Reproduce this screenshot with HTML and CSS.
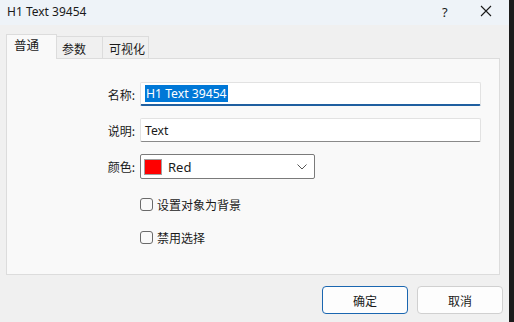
FILE: index.html
```html
<!DOCTYPE html>
<html>
<head>
<meta charset="utf-8">
<link rel="stylesheet" href="styles.css">
</head>
<body>
<div class="screen">
  <div class="window">
    <div class="titlebar">
      <span class="title">H1 Text 39454</span>
      <span class="help">?</span>
      <span class="close">
        <svg width="12" height="12" viewBox="0 0 12 12"><path d="M1 1 L11 11 M11 1 L1 11" stroke="#1a1a1a" stroke-width="1.1" fill="none"/></svg>
      </span>
    </div>
    <div class="content">
      <div class="tabs">
        <div class="tab active">普通</div>
        <div class="tab">参数</div>
        <div class="tab">可视化</div>
      </div>
      <div class="panel">
        <div class="form">
          <label class="lbl">名称:</label>
          <div class="input focused"><span class="sel">H1 Text 39454</span></div>
          <label class="lbl">说明:</label>
          <div class="input">Text</div>
          <label class="lbl">颜色:</label>
          <div class="combo">
            <span class="swatch"></span>
            <span class="combo-text">Red</span>
            <svg class="chev" width="10" height="6" viewBox="0 0 10 6"><path d="M0.5 0.5 L5 5 L9.5 0.5" stroke="#555" stroke-width="1" fill="none"/></svg>
          </div>
        </div>
        <div class="checks">
          <div class="check"><span class="box"></span><span>设置对象为背景</span></div>
          <div class="check"><span class="box"></span><span>禁用选择</span></div>
        </div>
      </div>
      <div class="buttons">
        <div class="btn primary">确定</div>
        <div class="btn">取消</div>
      </div>
    </div>
  </div>
  <div class="strip"></div>
</div>
</body>
</html>
```
FILE: styles.css
```css
html, body {
  margin: 0;
  padding: 0;
}
body {
  width: 514px;
  height: 322px;
  overflow: hidden;
  font-family: "Noto Sans", "Noto Sans CJK SC", sans-serif;
  font-size: 12px;
  color: #1a1a1a;
}
.screen {
  display: flex;
  width: 514px;
  height: 322px;
}
.window {
  width: 509px;
  height: 322px;
  background: #f0f0f0;
  display: flex;
  flex-direction: column;
}
.strip {
  width: 5px;
  background: #1b1b1b;
}
.titlebar {
  height: 25px;
  background: #eef3f8;
  display: flex;
  align-items: center;
  box-sizing: border-box;
  padding-left: 7px;
}
.title {
  flex: 1;
  font-size: 12px;
  line-height: 14px;
  margin-top: -2px;
}
.help {
  width: 12px;
  font-size: 13px;
  margin-right: 26px;
  margin-top: -2px;
}
.close {
  width: 12px;
  height: 12px;
  margin-right: 17px;
  margin-top: -3px;
  display: flex;
}
.content {
  flex: 1;
  display: flex;
  flex-direction: column;
  padding: 9px 9px 0 6px;
}
.tabs {
  display: flex;
  align-items: flex-end;
  height: 24px;
  font-family: "Noto Sans CJK SC", sans-serif;
  font-size: 12px;
  position: relative;
  z-index: 1;
}
.tab {
  height: 22px;
  width: 47px;
  box-sizing: border-box;
  border: 1px solid #dcdcdc;
  border-bottom: none;
  background: #f0f0f0;
  padding: 0 0 0 5px;
  line-height: 23px;
  white-space: nowrap;
  margin-left: -1px;
}
.tab.active {
  height: 25px;
  width: 51px;
  margin-left: 0;
  background: #f9f9f9;
  padding: 0 0 0 7px;
  line-height: 20px;
  margin-bottom: -1px;
  font-size: 12.5px;
}
.tab:last-child {
  padding-left: 6px;
}
.panel {
  height: 217px;
  box-sizing: border-box;
  background: #f9f9f9;
  border: 1px solid #dcdcdc;
  padding-top: 23px;
}
.form {
  display: grid;
  grid-template-columns: 128px 341px;
  column-gap: 5px;
  row-gap: 12px;
  align-items: center;
  font-family: "Noto Sans CJK SC", sans-serif;
}
.lbl {
  text-align: right;
  font-size: 12px;
}
.input {
  height: 24px;
  box-sizing: border-box;
  background: #ffffff;
  border: 1px solid #e2e2e2;
  border-bottom: 1px solid #8a8a8a;
  padding: 0 4px;
  display: flex;
  align-items: center;
  font-family: "Noto Sans", sans-serif;
  font-size: 12.2px;
  border-radius: 2px;
}
.input.focused {
  border-bottom: 2px solid #1f5fa0;
}
.sel {
  background: #0078d7;
  color: #ffffff;
  line-height: 17px;
  padding: 0 1px;
}
.combo {
  width: 175px;
  height: 25px;
  box-sizing: border-box;
  background: #ffffff;
  border: 1px solid #7a7a7a;
  border-radius: 2px;
  display: flex;
  align-items: center;
  padding: 0 7px 0 3px;
  font-family: "Noto Sans", sans-serif;
  font-size: 13px;
}
.swatch {
  width: 18px;
  height: 16px;
  box-sizing: border-box;
  background: #ff0000;
  border: 1px solid #a0a0a0;
}
.combo-text {
  flex: 1;
  margin-left: 6px;
}
.chev {
  display: block;
}
.checks {
  display: flex;
  flex-direction: column;
  gap: 20px;
  margin-top: 19px;
  padding-left: 133px;
  font-family: "Noto Sans CJK SC", sans-serif;
}
.check {
  display: flex;
  align-items: center;
  height: 13px;
  gap: 4px;
}
.box {
  width: 13px;
  height: 13px;
  box-sizing: border-box;
  border: 1px solid #6a6a6a;
  border-radius: 3px;
  background: #f9f9f9;
}
.buttons {
  display: flex;
  justify-content: flex-end;
  gap: 9px;
  padding-top: 11px;
  margin-right: -3px;
}
.btn {
  width: 86px;
  height: 28px;
  box-sizing: border-box;
  border: 1px solid #d0d0d0;
  border-radius: 4px;
  background: #fdfdfd;
  display: flex;
  align-items: center;
  justify-content: center;
  font-family: "Noto Sans CJK SC", sans-serif;
  font-size: 12px;
}
.btn.primary {
  border: 1px solid #1a66b0;
}
```
